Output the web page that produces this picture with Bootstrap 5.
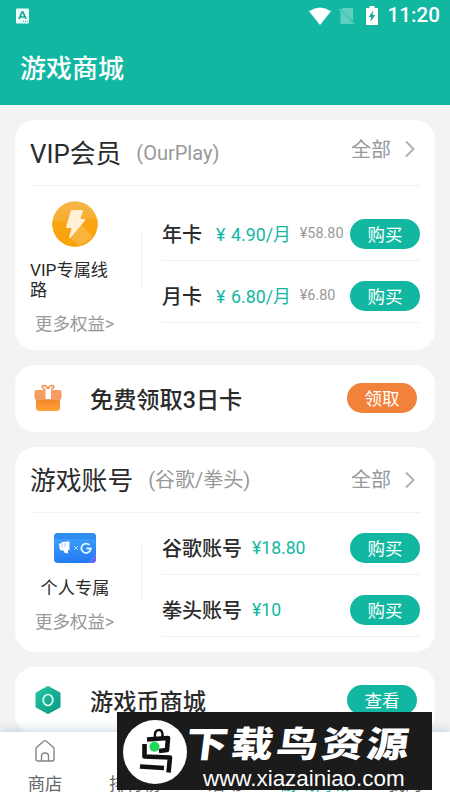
<!DOCTYPE html>
<html lang="zh-CN">
<head>
<meta charset="utf-8">
<meta name="viewport" content="width=device-width, initial-scale=1">
<title>游戏商城</title>
<link rel="stylesheet" href="https://cdn.jsdelivr.net/npm/bootstrap@5.3.0/dist/css/bootstrap.min.css">
<style>
body{font-family:Roboto,"Noto Sans CJK SC",sans-serif;background:#f3f3f3;color:#2b2b2b;line-height:1;white-space:nowrap}
svg{display:block;flex:none}
.screen{width:450px;height:800px}
.top{height:105px;background:#12b7a1}
.statusbar{height:31px;padding:0 10px 0 15px}
.sim{margin-left:7px}
.battery{margin-left:11px}
.clock{font-size:20.5px;font-weight:500;line-height:31px;margin-left:9px;letter-spacing:.1px}
.page-title{font-size:26px;font-weight:500;line-height:38px;padding:19px 0 0 20px}
.page-body{gap:15px;padding:15px 15px 0}
.panel{background:#fff;border-radius:20px;padding:0 15px}
.first{height:230px}
.second{height:205px}
.panel-head{height:66px;border-bottom:1.5px solid #f1f1f1}
.head-title{font-size:25.8px;line-height:68px}
.head-note{font-size:20px;color:#999;line-height:67px;margin-left:15px}
.head-all{font-size:20px;color:#999;line-height:60px}
.second .head-all{line-height:67px}
.chev{margin:20px 4px 0 13px}
.second .chev{margin-top:24px}
.side{width:112px}
.coin{margin:15px 0 0 22px}
.idcard{margin:20px 0 0 24px}
.side-name{font-size:17.2px;line-height:20px;white-space:normal}
.first .side-name{margin-top:13px;width:82px}
.second .side-name{margin-top:15px;width:90px}
.more{font-size:17.5px;line-height:22px;color:#999;margin:13px 0 0 5px}
.vline{width:1px;height:55px;background:#eee;margin:48px 20px 0 -1px}
.second .vline{margin-top:33px}
.offers{width:258px}
.offer{height:62px;padding-top:20px;border-bottom:1.5px solid #f1f1f1}
.first .offer:first-child{height:75px;padding-top:33px}
.offer-name{font-size:20px;font-weight:500;line-height:32px}
.price{font-size:17.8px;line-height:31px;color:#12b7a1}
.wide{margin-left:14px}
.yen{display:inline-block;width:15px}
.near{margin-left:10px;font-size:17.6px}
.old{font-size:14.4px;line-height:30px;color:#999;margin-left:9px}
.pill{width:70px;height:30px;padding:0;border:0;border-radius:15px;background:#12b7a1;color:#fff;font-size:17.5px;line-height:32px}
.pill.orange{background:#f2823a}
.single{height:67px;padding:0 18px 1px}
.single-name{font-size:23.2px;font-weight:500;line-height:34px;margin:3px 0 0 27px}
.tabs{height:68px;background:#fff;box-shadow:0 -1px 10px rgba(110,145,180,.4)}
.tab-item{width:90px;font-size:17.3px;color:#666;line-height:22px;padding-top:7px}
.tab-item svg{margin-bottom:10px}
.label-only{padding-top:41px}
.tab-item.on{color:#12b7a1}
.banner{left:117px;top:712px;width:315px;height:78px;background:#1b1b1b;z-index:5}
.bird{margin:6px 0 0 4px}
.banner-name{font-size:42px;font-weight:900;line-height:42px;letter-spacing:3.2px;margin:12px 0 0 -1px;transform:scaleY(.85) skewX(-6deg)}
.banner-url{font-family:"Liberation Sans",Arial,sans-serif;font-size:22.4px;line-height:22px;margin:2px 0 0 16px}
</style>
<script src="https://cdn.jsdelivr.net/npm/bootstrap@5.3.0/dist/js/bootstrap.bundle.min.js"></script>
</head>
<body>
<div class="screen position-relative overflow-hidden d-flex flex-column">
  <header class="top text-white flex-shrink-0">
    <div class="statusbar d-flex align-items-center">
      <svg width="15" height="16" viewBox="0 0 15 16"><rect x="1" y="0.5" width="13" height="15" rx="1" fill="#edfffb"/><path d="M4 11 7 4h1l3 7M5.300 9h4.500" fill="none" stroke="#12a895" stroke-width="1.700"/><path d="M8 13.300h5" stroke="#12a895" stroke-dasharray="1 1"/></svg>
      <svg class="ms-auto" width="22" height="18" viewBox="0 0 22 18"><path d="M0 4.200Q11-3 22 4.200L11 18Z" fill="#fff"/></svg>
      <svg class="sim" width="17" height="18" viewBox="0 0 17 18"><path d="M5 1h10v13L3 2.500ZM2.500 4.500 15 17H2.500Z" fill="#61cebf"/><path d="m1 2 15 15" stroke="#61cebf" stroke-width="1.300"/></svg>
      <svg class="battery" width="12" height="19" viewBox="0 0 12 19"><path d="M3.500 0h5v2H12v17H0V2h3.500Z" fill="#fff"/><path d="M7.200 4.500 2.700 11h2.600l-1 5 5-7H6.500Z" fill="#12a895"/></svg>
      <span class="clock">11:20</span>
    </div>
    <div class="page-title">游戏商城</div>
  </header>

  <main class="page-body d-flex flex-column flex-shrink-0">
    <section class="panel first">
      <div class="panel-head d-flex">
        <span class="head-title">VIP会员</span><span class="head-note">(OurPlay)</span>
        <span class="head-all ms-auto">全部</span>
        <svg class="chev" width="12" height="18" viewBox="0 0 12 18"><path d="m2 1.500 7.500 7.500L2 16.500" fill="none" stroke="#a9b4ba" stroke-width="2"/></svg>
      </div>
      <div class="d-flex">
        <div class="side">
          <svg class="coin" width="46" height="46" viewBox="0 0 46 46"><defs><linearGradient id="g1" x1="0" y1="0" x2="0" y2="1"><stop stop-color="#f5b64a"/><stop offset="1" stop-color="#faa307"/></linearGradient><clipPath id="c1"><circle cx="23" cy="23" r="22.700"/></clipPath></defs><circle cx="23" cy="23" r="22.700" fill="url(#g1)"/><path d="M0 21Q10 18 23 24 36 16 46 18V46H0Z" fill="#fca109" opacity=".7" clip-path="url(#c1)"/><path d="m29 23 12 13-13 9-9-7Z" fill="#f8bb50" opacity=".7" clip-path="url(#c1)"/><path d="M20 10h10l-3 9h5L18 36l3-10h-6Z" fill="#fff0d6" stroke="#fff0d6" stroke-width="2" stroke-linejoin="round"/></svg>
          <div class="side-name">VIP专属线路</div>
          <div class="more">更多权益&gt;</div>
        </div>
        <div class="vline"></div>
        <div class="offers">
          <div class="offer d-flex"><span class="offer-name">年卡</span><span class="price wide"><span class="yen">¥</span>4.90/月</span><span class="old">¥58.80</span><button class="pill btn ms-auto">购买</button></div>
          <div class="offer d-flex"><span class="offer-name">月卡</span><span class="price wide"><span class="yen">¥</span>6.80/月</span><span class="old">¥6.80</span><button class="pill btn ms-auto">购买</button></div>
        </div>
      </div>
    </section>

    <section class="panel single d-flex align-items-center">
      <svg width="30" height="30" viewBox="0 0 30 30"><defs><linearGradient id="g2" x1="0" y1="0" x2="0" y2="1"><stop stop-color="#f07e25"/><stop offset="1" stop-color="#ffa33a"/></linearGradient></defs><path d="M3 13h24v12q0 3-3 3H6q-3 0-3-3Z" fill="url(#g2)"/><rect x="1.500" y="7" width="27" height="10" rx="2" fill="#f59c60"/><path d="M15 7C8 6 8 2 11.500 2.500q2.500.5 3.500 4 1-3.500 3.500-4C22 2 22 6 15 7Z" fill="#fff" stroke="#f18a45" stroke-width="1.500"/><path d="M12.500 6h5.500v10h-5.500Z" fill="#fff"/></svg>
      <span class="single-name">免费领取3日卡</span><button class="pill orange btn ms-auto">领取</button>
    </section>

    <section class="panel second">
      <div class="panel-head d-flex">
        <span class="head-title">游戏账号</span><span class="head-note">(谷歌/拳头)</span>
        <span class="head-all ms-auto">全部</span>
        <svg class="chev" width="12" height="18" viewBox="0 0 12 18"><path d="m2 1.500 7.500 7.500L2 16.500" fill="none" stroke="#a9b4ba" stroke-width="2"/></svg>
      </div>
      <div class="d-flex">
        <div class="side">
          <svg class="idcard" width="42" height="30" viewBox="0 0 42 30"><defs><linearGradient id="g3" x1="0" y1="0" x2=".2" y2="1"><stop stop-color="#45a9ff"/><stop offset="1" stop-color="#247cf3"/></linearGradient><linearGradient id="g4" x1="0" y1="0" x2="1" y2="1"><stop offset=".3" stop-color="#4688ff"/><stop offset="1" stop-color="#7557f5"/></linearGradient></defs><rect width="42" height="30" rx="4" fill="url(#g3)"/><path d="M0 6V4q0-4 4-4h34q4 0 4 4v2Z" fill="#318cef"/><path d="M34 30 42 20v6q0 4-4 4Z" fill="url(#g4)"/><path d="m5 11 2.500-1 .5-1h3l.5-.5h4v8l-1.500 1v3l-4-1v-1.500L6 17Z" fill="#fff"/><path d="M8 10.500v4M11 10v4" stroke="#55a4f6" stroke-width=".6"/><path d="m20 13 4 4m0-4-4 4" stroke="#b4ddff" stroke-width=".9"/><path d="M35.500 12A4.700 4.700 0 1 0 36.800 15.500H32.500" fill="none" stroke="#e4f5ff" stroke-width="1.800"/></svg>
          <div class="side-name text-center">个人专属</div>
          <div class="more">更多权益&gt;</div>
        </div>
        <div class="vline"></div>
        <div class="offers">
          <div class="offer d-flex"><span class="offer-name">谷歌账号</span><span class="price near">¥18.80</span><button class="pill btn ms-auto">购买</button></div>
          <div class="offer d-flex"><span class="offer-name">拳头账号</span><span class="price near">¥10</span><button class="pill btn ms-auto">购买</button></div>
        </div>
      </div>
    </section>

    <section class="panel single d-flex align-items-center">
      <svg width="30" height="30" viewBox="0 0 30 30"><defs><linearGradient id="g5" x1="0" y1="0" x2="1" y2="1"><stop stop-color="#27c3a4"/><stop offset="1" stop-color="#099b83"/></linearGradient></defs><path d="m15 2.500 11 6v13l-11 6-11-6v-13Z" fill="url(#g5)" stroke="url(#g5)" stroke-width="3" stroke-linejoin="round"/><ellipse cx="15" cy="15" rx="4.800" ry="5.500" fill="none" stroke="#d5fff3" stroke-width="1.700"/></svg>
      <span class="single-name">游戏币商城</span><button class="pill btn ms-auto">查看</button>
    </section>
  </main>

  <nav class="tabs position-absolute bottom-0 start-0 w-100 d-flex text-center">
    <div class="tab-item"><svg class="mx-auto" width="22" height="24" viewBox="0 0 22 24"><path d="M2 10q0-1 1-2l7-6q1-.8 2 0l7 6q1 1 1 2v10q0 2-2 2H4q-2 0-2-2Z" fill="none" stroke="#858585" stroke-width="1.400"/><path d="M7.500 22v-5q0-3 3.500-3t3.500 3v5" fill="none" stroke="#858585" stroke-width="1.400"/></svg>商店</div>
    <div class="tab-item label-only">排行榜</div>
    <div class="tab-item label-only">活动</div>
    <div class="tab-item label-only on">游戏商城</div>
    <div class="tab-item label-only">我的</div>
  </nav>

  <aside class="banner position-absolute text-white d-flex overflow-hidden">
    <svg class="bird" width="66" height="66" viewBox="0 0 66 66"><circle cx="34" cy="34" r="32" fill="#fff"/><g fill="none" stroke="#111" stroke-width="4.600" stroke-linejoin="round"><path d="M34 20q-1-8 4-8 4 0 3.500 7" stroke-width="2.500"/><path d="M26 21.500 47 20l-1 12-8 1"/><path d="M23.500 26v12.500l25.500 1-1.500 15"/><path d="M19 48.500 43 50"/></g><circle cx="33.500" cy="28.700" r="5" fill="#1ed657"/></svg>
    <div><div class="banner-name">下载鸟资源</div><div class="banner-url">www.xiazainiao.com</div></div>
  </aside>
</div>
</body>
</html>
